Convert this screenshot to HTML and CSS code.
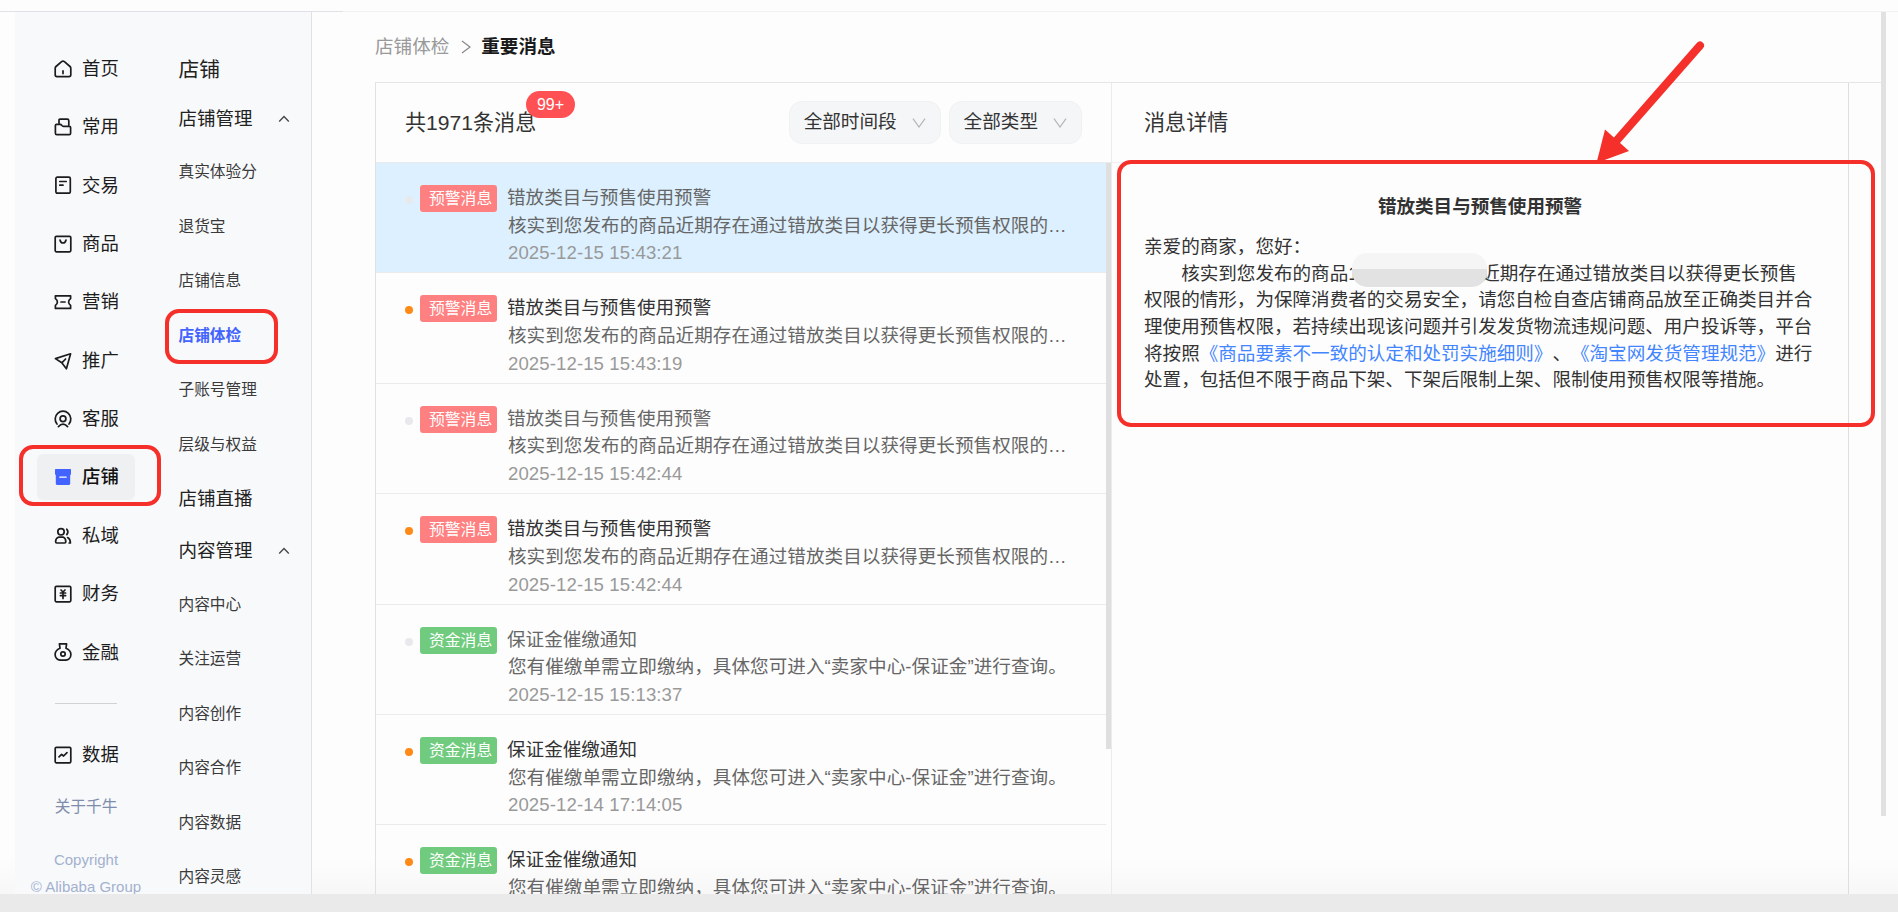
FILE: index.html
```html
<!DOCTYPE html>
<html lang="zh-CN">
<head>
    <meta charset="UTF-8">
    <meta name="viewport" content="width=device-width, initial-scale=1.0">
    <title>重要消息</title>
    <link rel="stylesheet" href="styles.css">
</head>
<body>
    <div class="top-bar"><div class="top-left"></div></div>

    <div class="page">
        <div class="sidebar">
            <div class="nav">
                <a class="nav-item"><svg viewBox="0 0 18 18"><path d="M1.2 8.2Q1.2 7.2 2 6.500L7.600 1.600Q9 .5 10.400 1.600L16 6.500Q16.800 7.200 16.800 8.200V14.800Q16.800 16.600 15 16.600H3Q1.200 16.600 1.200 14.800ZM9 10.800v2.800"/></svg>首页</a>
                <a class="nav-item"><svg viewBox="0 0 18 18"><path d="M5 5V2.200Q5 1.200 6 1.200H13.200Q14.800 1.200 14.800 2.800V7M1.400 7.600Q1.400 6.400 2.600 6.400H6Q7.200 6.400 7.800 7.400T9.600 8.400H15.400Q16.600 8.400 16.600 9.600V15.200Q16.600 16.600 15.200 16.600H2.800Q1.400 16.600 1.400 15.200Z"/></svg>常用</a>
                <a class="nav-item"><svg viewBox="0 0 18 18"><rect x="1.900" y="1.200" width="14.400" height="16" rx="1.400"/><path d="M5.800 5.500h6.400M5.800 9.200h3.200"/></svg>交易</a>
                <a class="nav-item"><svg viewBox="0 0 18 18"><rect x="1.200" y="1.400" width="15.600" height="15.400" rx="1.200"/><path d="M6 5Q6.600 8 9 8T12 5"/></svg>商品</a>
                <a class="nav-item"><svg viewBox="0 0 18 18"><path d="M1.400 2.800H16.600V5.600Q14.600 7 14.600 9T16.600 12.400V15.400H1.400V12.400Q3.400 11 3.400 9T1.400 5.600ZM7 9h4"/></svg>营销</a>
                <a class="nav-item"><svg viewBox="0 0 18 18"><path d="M1.400 6.600 16.600 1.800 12.400 16.800 7.800 10.800ZM7.800 10.800 11.600 7"/></svg>推广</a>
                <a class="nav-item"><svg viewBox="0 0 18 18"><path d="M3 14A7.800 7.800 0 1 1 15 14M4.400 16.600Q9 11.600 13.600 16.600"/><circle cx="9" cy="8.800" r="2.900"/></svg>客服</a>
                <a class="nav-item active"><svg viewBox="0 0 18 18"><path class="fill" d="M1.600 1H16.400Q17 1 17 1.600V5.400Q17 6.600 16.200 7.200V15.400Q16.200 17 14.600 17H3.400Q1.800 17 1.800 15.400V7.200Q1 6.600 1 5.400V1.600Q1 1 1.600 1Z"/><path class="dash" d="M5.800 9.200h6.400"/></svg>店铺</a>
                <a class="nav-item"><svg viewBox="0 0 18 18"><circle cx="7" cy="4.800" r="3.200"/><path d="M4.400 10.200Q1.600 11.200 1.600 14.800Q1.600 16 2.800 16H10.600Q11.800 16 11.800 14.800Q11.800 11.200 9.400 10.200ZM12.800 2.200Q15 4.800 12.800 7.600M13.600 10.600Q16.400 12 16.400 16H15.200"/></svg>私域</a>
                <a class="nav-item"><svg viewBox="0 0 18 18"><rect x="1.200" y="1.400" width="15.600" height="15.400" rx="1.200"/><path d="M7 5 9 7 11 5M6.400 8h5.200M6.400 10.600h5.200M9 7V13.400"/></svg>财务</a>
                <a class="nav-item"><svg viewBox="0 0 18 18"><path d="M5.400 .9H12.600L12 5.200C15 6.400 16.900 9 16.900 11.600 16.900 15 14.500 17.200 11 17.200H7C3.500 17.200 1.100 15 1.100 11.600 1.100 9 3 6.400 6 5.200Z"/><circle cx="9" cy="11" r="2.200"/></svg>金融</a>
                <div class="nav-line"></div>
                <a class="nav-item"><svg viewBox="0 0 18 18"><rect x="1.200" y="1.400" width="15.600" height="15.400" rx="1.200"/><path d="M5 10.800 7.600 8.400 9.600 10 13 6.600"/></svg>数据</a>
                <a class="about">关于千牛</a>
                <div class="copyright">Copyright<br>© Alibaba Group</div>
                <div class="mark mark-nav"></div>
            </div>

            <div class="sub-nav">
                <div class="sub-title">店铺</div>
                <div class="sub-group">店铺管理<svg viewBox="0 0 12 8"><path d="M1.200 6.500 6 1.500 10.800 6.500"/></svg></div>
                <a class="sub-item">真实体验分</a>
                <a class="sub-item">退货宝</a>
                <a class="sub-item">店铺信息</a>
                <a class="sub-item active">店铺体检</a>
                <a class="sub-item">子账号管理</a>
                <a class="sub-item">层级与权益</a>
                <div class="sub-group single">店铺直播</div>
                <div class="sub-group">内容管理<svg viewBox="0 0 12 8"><path d="M1.200 6.500 6 1.500 10.800 6.500"/></svg></div>
                <a class="sub-item">内容中心</a>
                <a class="sub-item">关注运营</a>
                <a class="sub-item">内容创作</a>
                <a class="sub-item">内容合作</a>
                <a class="sub-item">内容数据</a>
                <a class="sub-item">内容灵感</a>
                <div class="mark mark-sub"></div>
            </div>
        </div>

        <div class="content">
            <div class="breadcrumb">
                <span>店铺体检</span>
                <svg viewBox="0 0 10 14"><path d="M1 1 9 7 1 13"/></svg>
                <b>重要消息</b>
            </div>

            <div class="panel">
                <div class="list">
                    <div class="list-header">
                        <div class="total">共1971条消息<span class="badge">99+</span></div>
                        <div class="select">全部时间段<svg viewBox="0 0 14 10"><path d="M1 .6 7 9 13 .6"/></svg></div>
                        <div class="select">全部类型<svg viewBox="0 0 14 10"><path d="M1 .6 7 9 13 .6"/></svg></div>
                    </div>
                    <div class="rows">
                        <div class="row selected">
                            <i class="dot"></i><span class="tag">预警消息</span>
                            <div class="info">
                                <div class="title">错放类目与预售使用预警</div>
                                <div class="desc">核实到您发布的商品近期存在通过错放类目以获得更长预售权限的…</div>
                                <div class="time">2025-12-15 15:43:21</div>
                            </div>
                        </div>
                        <div class="row unread">
                            <i class="dot"></i><span class="tag">预警消息</span>
                            <div class="info">
                                <div class="title">错放类目与预售使用预警</div>
                                <div class="desc">核实到您发布的商品近期存在通过错放类目以获得更长预售权限的…</div>
                                <div class="time">2025-12-15 15:43:19</div>
                            </div>
                        </div>
                        <div class="row">
                            <i class="dot"></i><span class="tag">预警消息</span>
                            <div class="info">
                                <div class="title">错放类目与预售使用预警</div>
                                <div class="desc">核实到您发布的商品近期存在通过错放类目以获得更长预售权限的…</div>
                                <div class="time">2025-12-15 15:42:44</div>
                            </div>
                        </div>
                        <div class="row unread">
                            <i class="dot"></i><span class="tag">预警消息</span>
                            <div class="info">
                                <div class="title">错放类目与预售使用预警</div>
                                <div class="desc">核实到您发布的商品近期存在通过错放类目以获得更长预售权限的…</div>
                                <div class="time">2025-12-15 15:42:44</div>
                            </div>
                        </div>
                        <div class="row">
                            <i class="dot"></i><span class="tag green">资金消息</span>
                            <div class="info">
                                <div class="title">保证金催缴通知</div>
                                <div class="desc">您有催缴单需立即缴纳，具体您可进入“卖家中心-保证金”进行查询。</div>
                                <div class="time">2025-12-15 15:13:37</div>
                            </div>
                        </div>
                        <div class="row unread">
                            <i class="dot"></i><span class="tag green">资金消息</span>
                            <div class="info">
                                <div class="title">保证金催缴通知</div>
                                <div class="desc">您有催缴单需立即缴纳，具体您可进入“卖家中心-保证金”进行查询。</div>
                                <div class="time">2025-12-14 17:14:05</div>
                            </div>
                        </div>
                        <div class="row unread">
                            <i class="dot"></i><span class="tag green">资金消息</span>
                            <div class="info">
                                <div class="title">保证金催缴通知</div>
                                <div class="desc">您有催缴单需立即缴纳，具体您可进入“卖家中心-保证金”进行查询。</div>
                            </div>
                        </div>
                        <div class="list-scroll"></div>
                    </div>
                </div>

                <div class="detail">
                    <div class="detail-header">消息详情</div>
                    <div class="detail-body">
                        <h3>错放类目与预售使用预警</h3>
                        <p>亲爱的商家，您好：</p>
                        <p class="indent">核实到您发布的商品<span class="goods-id">1</span>近期存在通过错放类目以获得更长预售<br>权限的情形，为保障消费者的交易安全，请您自检自查店铺商品放至正确类目并合<br>理使用预售权限，若持续出现该问题并引发发货物流违规问题、用户投诉等，平台<br>将按照<a>《商品要素不一致的认定和处罚实施细则》</a>、<a>《淘宝网发货管理规范》</a>进行<br>处置，包括但不限于商品下架、下架后限制上架、限制使用预售权限等措施。</p>
                    </div>
                    <div class="mark mark-detail"></div>
                    <svg class="arrow" viewBox="0 0 120 130"><path class="shaft" d="M109 10.500 20 112"/><path class="head" d="M5.500 128 14 94.500 38 116Z"/></svg>
                </div>
            </div>
        </div>

        <div class="page-scroll"></div>
    </div>

    <div class="bottom-bar"></div>
</body>
</html>
```
FILE: styles.css
```css
* {
    box-sizing: border-box;
}
body {
    margin: 0;
    height: 912px;
    display: flex;
    flex-direction: column;
    overflow: hidden;
    background: #fdfdfd;
    color: #333;
    font-family: "Liberation Sans", "Noto Sans CJK SC", sans-serif;
    font-size: 18.57px;
    line-height: 1.4;
    text-spacing-trim: space-all;
    white-space: nowrap;
}
svg {
    fill: none;
    flex: none;
}
.top-bar {
    flex: none;
    height: 12px;
    border-bottom: 1px solid #f2f2f3;
    display: flex;
}
.top-left {
    width: 343px;
    height: 12px;
    border-bottom: 1px solid #dfe1e6;
}
.page {
    flex: 1;
    min-height: 0;
    display: flex;
    overflow: hidden;
    background: linear-gradient(to top, #f7f7f7, rgba(253, 253, 253, 0) 36px);
}
.bottom-bar {
    flex: none;
    height: 18px;
    background: #eaeaea;
}

/* sidebar */
.sidebar {
    width: 297px;
    margin-left: 15px;
    display: flex;
    flex: none;
    background: #f8f9fb;
    border-right: 1px solid #e0e2e6;
}
.nav {
    position: relative;
    display: flex;
    flex-direction: column;
    width: 142px;
    padding: 27.5px 22px 0;
    color: #1c1c1c;
}
.nav-item {
    display: flex;
    flex: none;
    align-items: center;
    height: 46px;
    margin: 6.2px 0;
    padding-left: 17px;
    font-size: 18.4px;
    border-radius: 6px;
}
.nav-item svg {
    width: 18px;
    height: 18px;
    margin-right: 10px;
    stroke: #1c1c1c;
    stroke-width: 1.7;
    stroke-linejoin: round;
    stroke-linecap: round;
}
.nav-item.active {
    background: #eff0f1;
    font-weight: 500;
    color: #111;
}
.nav-item .fill {
    fill: #4263ff;
    stroke: none;
}
.nav-item .dash {
    stroke: #fff;
    stroke-width: 1.2;
}
.nav-line {
    flex: none;
    height: 1px;
    margin: 21.5px 18px;
    background: #d0d2d6;
}
.about {
    flex: none;
    height: 46px;
    line-height: 46px;
    text-align: center;
    font-size: 15.7px;
    color: #7f8cab;
}
.copyright {
    flex: none;
    margin: 17px -22px 0;
    text-align: center;
    font-size: 15px;
    line-height: 26.5px;
    color: #a3b1cf;
}
.sub-nav {
    position: relative;
    flex: 1;
    padding: 32px 21.5px 0;
}
.sub-title {
    height: 50px;
    line-height: 51px;
    font-size: 20.8px;
    color: #222;
}
.sub-group {
    display: flex;
    align-items: center;
    justify-content: space-between;
    height: 50.25px;
    font-size: 18.5px;
    color: #222;
}
.sub-group.single {
    height: 55px;
}
.sub-group svg {
    width: 12px;
    height: 8px;
    stroke: #444;
    stroke-width: 1.3;
}
.sub-item {
    display: block;
    height: 54.5px;
    line-height: 55.5px;
    font-size: 15.7px;
    color: #3a3a3a;
}
.sub-item.active {
    color: #4263ff;
    font-weight: bold;
}

/* red marks drawn over the page */
.mark {
    position: absolute;
    border: 4px solid #f5302b;
    border-radius: 14px;
}
.mark-nav {
    left: 4px;
    top: 433px;
    width: 142px;
    height: 61px;
}
.mark-sub {
    left: 8px;
    top: 297px;
    width: 113px;
    height: 55px;
}
.mark-detail {
    left: 5px;
    top: 77px;
    width: 758px;
    height: 267px;
    border-width: 4.5px;
}
.arrow {
    position: absolute;
    left: 479px;
    top: -48px;
    width: 120px;
    height: 130px;
}
.arrow .shaft {
    stroke: #f5302b;
    stroke-width: 8;
    stroke-linecap: round;
}
.arrow .head {
    fill: #f5302b;
}

/* content */
.content {
    width: 1569px;
    flex: none;
    padding-left: 63px;
    display: flex;
    flex-direction: column;
}
.breadcrumb {
    display: flex;
    align-items: center;
    height: 70px;
    flex: none;
    padding-bottom: 1px;
    color: #999;
}
.breadcrumb svg {
    width: 10px;
    height: 14px;
    margin: 0 10px 0 12px;
    stroke: #888;
    stroke-width: 1.2;
}
.breadcrumb b {
    color: #1a1a1a;
}
.panel {
    flex: 1;
    min-height: 0;
    display: flex;
    border-top: 1px solid #e6e6e6;
    border-left: 1px solid #e2e2e2;
}
.list {
    width: 736px;
    flex: none;
    display: flex;
    flex-direction: column;
    border-right: 1px solid #ebebeb;
}
.list-header {
    display: flex;
    align-items: center;
    height: 80px;
    flex: none;
    padding: 0 29px;
    gap: 8px;
    border-bottom: 1px solid #ebebeb;
}
.total {
    position: relative;
    margin-right: auto;
    font-size: 21.1px;
}
.badge {
    position: absolute;
    left: 121px;
    top: -17px;
    width: 49px;
    height: 27px;
    line-height: 28px;
    border-radius: 14px;
    background: #ff5053;
    color: #fff;
    font-size: 16px;
    text-align: center;
}
.select {
    display: flex;
    align-items: center;
    height: 43px;
    padding: 0 14px;
    font-size: 18.6px;
    background: #f5f6f8;
    border: 1px solid #f0f1f3;
    border-radius: 13px;
}
.select svg {
    width: 14px;
    height: 10px;
    margin-left: 15px;
    stroke: #b5b5b5;
    stroke-width: 1.2;
}
.rows {
    position: relative;
    flex: 1;
    min-height: 0;
    overflow: hidden;
    padding-right: 5px;
}
.row {
    display: flex;
    height: 110.4px;
    padding: 20px 0 0 29px;
    border-bottom: 1px solid #ebebeb;
}
.row.selected {
    background: #dcf0ff;
}
.dot {
    width: 8px;
    height: 8px;
    margin: 13px 7px 0 0;
    border-radius: 50%;
    background: #e8e9ed;
}
.unread .dot {
    background: #ff8a17;
}
.tag {
    width: 77px;
    height: 27px;
    line-height: 28px;
    margin: 2px 10px 0 0;
    padding-left: 9px;
    border-radius: 3px;
    background: #ff8080;
    color: #fff;
    font-size: 15.8px;
}
.tag.green {
    background: #70cb7e;
}
.info {
    line-height: 27.7px;
}
.title {
    margin-top: 1px;
    color: #666;
}
.unread .title {
    color: #333;
}
.desc {
    padding-left: 1px;
    letter-spacing: 0.06px;
    color: #666;
}
.time {
    padding-left: 1px;
    letter-spacing: 0.11px;
    color: #999;
}
.list-scroll {
    position: absolute;
    right: 0;
    top: 0;
    width: 5px;
    height: 586px;
    background: #dfdfdf;
}

.detail {
    position: relative;
    width: 737px;
    border-right: 1px solid #dedede;
}
.detail-header {
    height: 80px;
    line-height: 80px;
    padding-left: 32px;
    font-size: 21.1px;
    border-bottom: 1px solid #f0f0f0;
}
.detail-body {
    padding: 31.2px 32px 0;
    line-height: 26.6px;
}
.detail-body h3 {
    margin: 0 0 13.5px;
    font-size: 18.57px;
    text-align: center;
}
.detail-body p {
    margin: 0;
}
.indent {
    text-indent: 2em;
}
.detail-body a {
    color: #4285ff;
}
.goods-id {
    position: relative;
    display: inline-block;
    width: 133px;
    text-indent: 0;
}
.goods-id::after {
    content: "";
    position: absolute;
    left: 4px;
    top: -8px;
    width: 135px;
    height: 34px;
    border-radius: 15px;
    background: linear-gradient(#f5f5f5 16px, #e2e2e2 16px);
}
.page-scroll {
    width: 5px;
    height: 804px;
    background: #e1e1e1;
}
```
